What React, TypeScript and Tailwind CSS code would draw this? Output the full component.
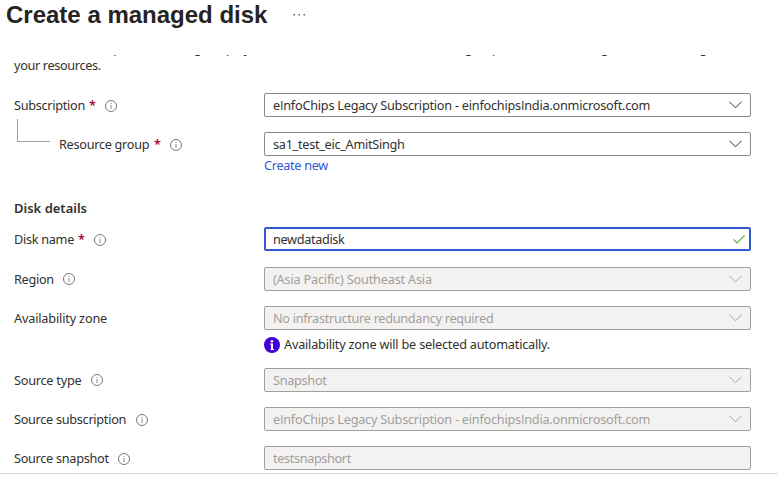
import { Fragment, type ReactNode } from 'react';

function InfoIcon() {
  return (
    <svg className="block h-3 w-3 shrink-0" viewBox="0 0 12 12" fill="none" stroke="#6b6a69">
      <circle cx="6" cy="6" r="5.5" strokeWidth="0.9" />
      <path d="M6 5V9" stroke="#8a8988" />
      <path d="M6 3V4" stroke="#8a8988" />
    </svg>
  );
}

function Chevron({ disabled }: { disabled?: boolean }) {
  return (
    <svg className="h-2 w-[13px] shrink-0" viewBox="0 0 13 8" fill="none" stroke={disabled ? '#a5a3a1' : '#323130'}>
      <path d="M0.4 0.7L6.5 6.8L12.6 0.7" />
    </svg>
  );
}

/* Sets the capital I in a face whose I has no serifs. */
function PlainI({ text, tracking = '' }: { text: string; tracking?: string }) {
  return (
    <span className={tracking}>
      {text.split('I').map((part, i) => (
        <Fragment key={i}>
          {i > 0 && <span className="font-['Open_Sans',sans-serif]">I</span>}
          {part}
        </Fragment>
      ))}
    </span>
  );
}

interface LabelProps {
  text: string;
  width: string;
  required?: boolean;
  info?: boolean;
  raised?: boolean;
  tracking?: string;
}

function Label({ text, width, required, info = true, raised, tracking = 'tracking-[-0.29px]' }: LabelProps) {
  return (
    <div className="flex h-6 items-center whitespace-nowrap">
      <span className={`flex justify-between ${width}`}>
        <span className={tracking}>{text}</span>
        {required && <span className="w-[7px] font-semibold text-[#b0002f]">*</span>}
      </span>
      {info && (
        <span className={raised ? 'ml-[9px]' : 'ml-[9px] mt-0.5'}>
          <InfoIcon />
        </span>
      )}
    </div>
  );
}

function Row({ label, className, children }: { label: ReactNode; className: string; children: ReactNode }) {
  return (
    <div className={`flex h-6 pl-3.5 ${className}`}>
      <div className="w-[250px] shrink-0">{label}</div>
      {children}
    </div>
  );
}

interface FieldProps {
  value: string;
  disabled?: boolean;
  chevron?: boolean;
  tracking?: string;
}

function Field({ value, disabled, chevron = true, tracking = 'tracking-[-0.235px]' }: FieldProps) {
  return (
    <div
      className={`flex h-6 w-[487px] items-center justify-between rounded-[2px] border pl-2 pr-2 ${
        disabled ? 'border-[#a19f9d] bg-[#f3f2f1] text-[#a19f9d]' : 'border-[#8a8886] bg-white'
      }`}
    >
      <PlainI text={value} tracking={tracking} />
      {chevron && <Chevron disabled={disabled} />}
    </div>
  );
}

export default function App() {
  return (
    <div className="flex h-[480px] w-[778px] flex-col overflow-hidden bg-white font-['Noto_Sans',sans-serif] text-[12.7px] leading-[18px] text-[#323130]">
      <header className="flex h-[55px] shrink-0 items-start pl-1.5">
        <h1 className="w-[287px] whitespace-nowrap font-['Liberation_Sans',Arial,sans-serif] text-[24px] font-bold leading-[30px] text-[#252423]">
          Create a managed disk
        </h1>
        <svg className="mt-3.5 h-[3px] w-3" viewBox="0 0 12 3" fill="#605e5c">
          <path d="M0.5 0h1.5v1.5H0.5zM5.5 0H7v1.5H5.5zM10.5 0h1.5v1.5h-1.5z" />
        </svg>
      </header>
      <main className="flex h-[418px] shrink-0 flex-col overflow-hidden">
        <div className="h-[20px] shrink-0 overflow-hidden whitespace-nowrap pl-3.5">
          <p className="-mt-4 tracking-[-0.25px]">
            Select the subscription to manage deployed resources and costs. Use resource groups like folders to organize and manage all
          </p>
          <p className="-mt-px tracking-[-0.34px]">your resources.</p>
        </div>
        <Row className="mt-[18px]" label={<Label text="Subscription" width="w-[82px]" required />}>
          <Field value="eInfoChips Legacy Subscription - einfochipsIndia.onmicrosoft.com" />
        </Row>
        <Row
          className="mt-[15px]"
          label={
            <div className="flex pl-[3px]">
              <div className="-mt-[13px] mr-[9px] h-[23px] w-[33px] border-b border-l border-[#a19f9d]" />
              <Label text="Resource group" width="w-[102px]" required />
            </div>
          }
        >
          <Field value="sa1_test_eic_AmitSingh" tracking="tracking-[-0.28px]" />
        </Row>
        <a className="ml-[264px] h-[18px] tracking-[-0.3px] text-[#3355d4]">Create new</a>
        <h2 className="mt-[25px] pl-3.5 text-[13px] font-semibold">Disk details</h2>
        <Row className="mt-[10px]" label={<Label text="Disk name" width="w-[71px]" required />}>
          <div className="flex h-6 w-[487px] items-center justify-between rounded-[2px] border-2 border-[#3159d1] pl-[7px] pr-1">
            <span className="tracking-[-0.34px]">newdatadisk</span>
            <svg className="h-[9px] w-3" viewBox="0 0 12 9" fill="none" stroke="#5bb53c" strokeWidth="1.2">
              <path d="M0.4 4.4L4 8L11.6 0.5" />
            </svg>
          </div>
        </Row>
        <Row className="mt-4" label={<Label text="Region" width="w-10" raised />}>
          <Field value="(Asia Pacific) Southeast Asia" tracking="tracking-[-0.19px]" disabled />
        </Row>
        <Row
          className="mt-[15px]"
          label={<Label text="Availability zone" width="w-[94px]" tracking="tracking-[-0.17px]" info={false} />}
        >
          <Field value="No infrastructure redundancy required" tracking="tracking-[-0.29px]" disabled />
        </Row>
        <div className="ml-[264px] mt-1.5 flex h-[18px] items-center">
          <svg className="mr-1 h-4 w-4" viewBox="0 0 16 16">
            <circle cx="8" cy="8" r="8" fill="#4300d9" />
            <circle cx="8" cy="4.2" r="1.3" fill="white" />
            <path d="M6 6.5h3V12h1v1H6.5v-1H7V7.5H6z" fill="white" />
          </svg>
          <span className="-mt-0.5 tracking-[-0.21px]">Availability zone will be selected automatically.</span>
        </div>
        <Row
          className="mt-[14px]"
          label={<Label text="Source type" width="w-[68px]" tracking="tracking-[-0.24px]" raised />}
        >
          <Field value="Snapshot" tracking="tracking-[-0.29px]" disabled />
        </Row>
        <Row className="mt-[15px]" label={<Label text="Source subscription" width="w-[113px]" />}>
          <Field value="eInfoChips Legacy Subscription - einfochipsIndia.onmicrosoft.com" disabled />
        </Row>
        <Row className="mt-[15px]" label={<Label text="Source snapshot" width="w-[95px]" />}>
          <Field value="testsnapshort" tracking="tracking-[-0.36px]" disabled chevron={false} />
        </Row>
      </main>
      <footer className="h-[7px] border-t border-[#dddcdb]" />
    </div>
  );
}
